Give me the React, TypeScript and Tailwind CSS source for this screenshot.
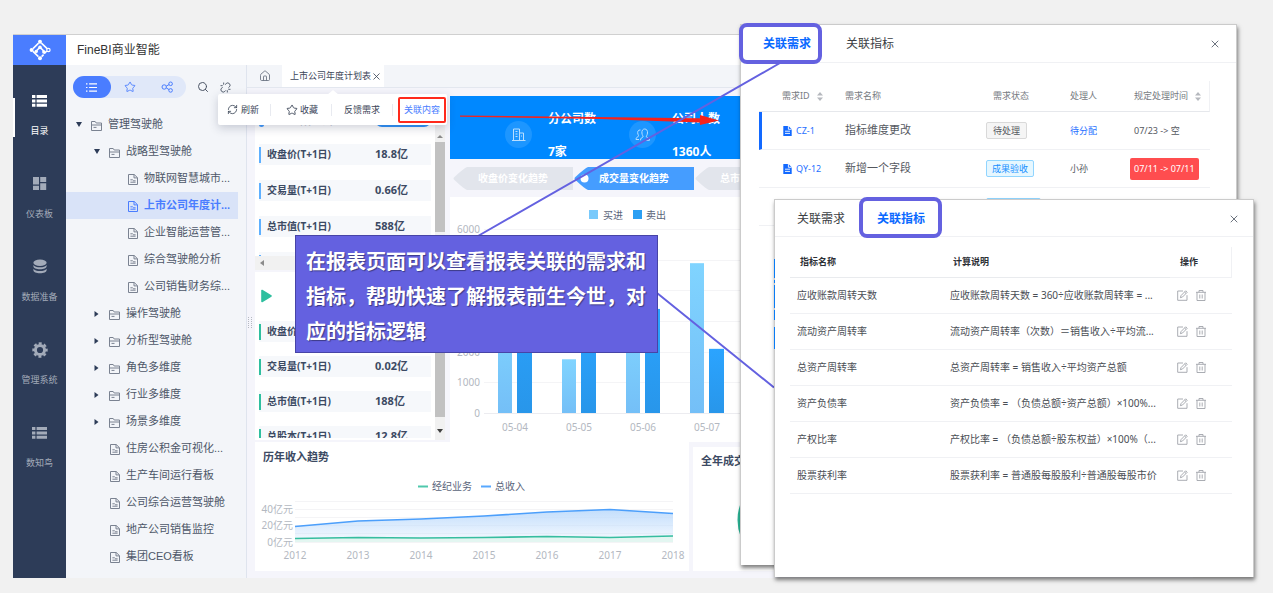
import React from "react";
import { Home, RefreshCw, Search, Star, Unlink, X } from "lucide-react";

const sans = "font-['Noto_Sans','Noto_Sans_CJK_SC',sans-serif]";
const helvetica = "font-['Liberation_Sans','Noto_Sans_CJK_SC',sans-serif]";

/* ---------- icons ---------- */

function Logo() {
  return (
    <svg width="22" height="22" viewBox="0 0 22 22" fill="none" stroke="#fff" strokeWidth="1.6">
      <path d="M9.6 4.2 4 9.6M4 12.4l5.4 5.2M12.6 17.6l2-2M12.4 4.2l6 5.6" />
      <path d="M11 8.2 7.2 12M11 8.2l4.4 4.4M17.8 12l-2.6 2.6" />
      <circle cx="11" cy="2.8" r="2" fill="#fff" stroke="none" />
      <circle cx="11" cy="19.2" r="2" fill="#fff" stroke="none" />
      <circle cx="2.6" cy="11" r="2" fill="#fff" stroke="none" />
      <circle cx="11" cy="8.4" r="1.8" fill="#fff" stroke="none" />
      <circle cx="7.2" cy="12.4" r="1.7" fill="#fff" stroke="none" />
      <circle cx="14.8" cy="13" r="1.7" fill="#fff" stroke="none" />
      <circle cx="19.4" cy="11" r="1.7" strokeWidth="1.2" />
    </svg>
  );
}

function ListBlocks() {
  return (
    <svg width="16" height="14" viewBox="0 0 16 14" fill="currentColor">
      <path d="M0 1h3.4v3H0zM4.6 1H15v3H4.6zM0 5.4h3.4v3H0zM4.6 5.4H15v3H4.6zM0 9.8h3.4v3H0zM4.6 9.8H15v3H4.6z" />
    </svg>
  );
}

function Blocks() {
  return (
    <svg width="16" height="14" viewBox="0 0 16 14" fill="currentColor">
      <path d="M1 0h6v7.6H1zM8.2 0h6v5H8.2zM1 8.8h6V13H1zM8.2 6.2h6V13H8.2z" />
    </svg>
  );
}

function Database() {
  return (
    <svg width="16" height="16" viewBox="0 0 16 16" fill="currentColor">
      <ellipse cx="8" cy="3.8" rx="6.6" ry="3.2" />
      <path d="M1.4 6c1 1.6 3.6 2.3 6.6 2.3S13.600 7.600 14.600 6v1.300c0 1.700-3 3-6.600 3s-6.600-1.300-6.600-3z" />
      <path d="M1.400 9.800c1 1.600 3.600 2.300 6.600 2.300s5.600-.7 6.600-2.300v1.500c0 1.700-3 3-6.600 3s-6.600-1.300-6.600-3z" />
    </svg>
  );
}

function Gear() {
  return (
    <svg width="16" height="16" viewBox="0 0 16 16" fill="none" stroke="currentColor">
      <circle cx="8" cy="8" r="4.600" strokeWidth="3" />
      <circle cx="8" cy="8" r="6.600" strokeWidth="2.200" strokeDasharray="3 2.184" strokeDashoffset="1.500" />
    </svg>
  );
}

function LinesIcon({ size }: { size: number }) {
  return (
    <svg width={size} height={size} viewBox="0 0 12 12" fill="none" stroke="currentColor" strokeWidth="1.2">
      <path d="M0 2h1.600M3.400 2H12M0 6h1.600M3.400 6H12M0 10h1.600M3.400 10H12" />
    </svg>
  );
}

function ShareNodes() {
  return (
    <svg width="13" height="12" viewBox="0 0 13 12" fill="none" stroke="currentColor">
      <circle cx="3.200" cy="6" r="2.200" />
      <circle cx="9.600" cy="2.800" r="1.800" />
      <circle cx="9.600" cy="9.400" r="1.800" />
      <path d="M5.200 5.200 8 3.600M5.200 6.800 8 8.600" />
    </svg>
  );
}

function FolderIcon() {
  return (
    <svg width="11" height="10" viewBox="0 0 11 10" fill="none" stroke="currentColor">
      <path d="M.5 9.500v-9h3.700l1 1.500h5.300v7.500z" />
      <path d="M.5 4h10M2.500 6.400h3" />
    </svg>
  );
}

function DocIcon() {
  return (
    <svg width="10" height="11" viewBox="0 0 10 11" fill="none" stroke="currentColor">
      <path d="M.5.500h5.700l3.300 3.200v6.800h-9z" />
      <path d="M6 .5v3.400h3.500M2.400 5.800h2.400M2.400 8.200h5.200M5 6.800h2.600" />
    </svg>
  );
}

function SolidDoc() {
  return (
    <svg width="9" height="10" viewBox="0 0 9 10">
      <path d="M.3 0h5.200L8.700 3.200V10H.3z" fill="#1269ff" />
      <path d="M5.400 0v3.300h3.300M2 5.200h5M2 7.400h5" stroke="#fff" strokeWidth=".9" fill="none" />
    </svg>
  );
}

function EditIcon() {
  return (
    <svg width="11" height="11" viewBox="0 0 11 11" fill="none" stroke="currentColor" strokeWidth=".9">
      <path d="M6 1H.7v9.300H10V5.200" />
      <path d="M3.400 7.700 4 5.600 8.700.8l1.500 1.500-4.700 4.700zM7.600 2l1.400 1.400" />
    </svg>
  );
}

function TrashIcon() {
  return (
    <svg width="10" height="11" viewBox="0 0 10 11" fill="none" stroke="currentColor" strokeWidth=".9">
      <path d="M0 2.300h10M3 2.200V.500h4v1.700M1 2.300v8.200h8V2.300M3.800 4.500v4M6.200 4.500v4" />
    </svg>
  );
}

function Sorter() {
  return (
    <svg width="6" height="9" viewBox="0 0 6 9" fill="#b5b8be">
      <path d="M3 0l3 3.600H0zM3 9l3-3.600H0z" />
    </svg>
  );
}

/* ---------- navigation ---------- */

const navItems = [
  { label: "目录", icon: <ListBlocks />, active: true },
  { label: "仪表板", icon: <Blocks />, active: false },
  { label: "数据准备", icon: <Database />, active: false },
  { label: "管理系统", icon: <Gear />, active: false },
  { label: "数知鸟", icon: <ListBlocks />, active: false },
];

function NavRail() {
  return (
    <nav className="w-[53px] shrink-0 bg-[#2d3c58] pt-[25px]">
      {navItems.map((item) => (
        <button
          key={item.label}
          className={`relative flex h-[83px] w-full flex-col items-center ${item.active ? "text-white" : "text-[#a3abb9]"}`}
        >
          {item.active && <span className="absolute left-0 top-2 h-[39px] w-[2px] bg-white" />}
          <span className="flex h-[22px] items-center">{item.icon}</span>
          <span className="mt-[12px] text-[9px] leading-[14px]">{item.label}</span>
        </button>
      ))}
    </nav>
  );
}

type Node = { label: string; depth: number; kind: "open" | "closed" | "doc"; selected?: boolean };

const tree: Node[] = [
  { label: "管理驾驶舱", depth: 0, kind: "open" },
  { label: "战略型驾驶舱", depth: 1, kind: "open" },
  { label: "物联网智慧城市...", depth: 2, kind: "doc" },
  { label: "上市公司年度计...", depth: 2, kind: "doc", selected: true },
  { label: "企业智能运营管...", depth: 2, kind: "doc" },
  { label: "综合驾驶舱分析", depth: 2, kind: "doc" },
  { label: "公司销售财务综...", depth: 2, kind: "doc" },
  { label: "操作驾驶舱", depth: 1, kind: "closed" },
  { label: "分析型驾驶舱", depth: 1, kind: "closed" },
  { label: "角色多维度", depth: 1, kind: "closed" },
  { label: "行业多维度", depth: 1, kind: "closed" },
  { label: "场景多维度", depth: 1, kind: "closed" },
  { label: "住房公积金可视化...", depth: 1, kind: "doc" },
  { label: "生产车间运行看板", depth: 1, kind: "doc" },
  { label: "公司综合运营驾驶舱", depth: 1, kind: "doc" },
  { label: "地产公司销售监控", depth: 1, kind: "doc" },
  { label: "集团CEO看板", depth: 1, kind: "doc" },
];

const indent = ["pl-[10px]", "pl-[28px]", "pl-[46px]"];

function TreePanel() {
  return (
    <aside className={`w-[181px] shrink-0 border-r border-[#dfe4ee] bg-[#f3f5f9] pt-[11px] ${helvetica}`}>
      <div className="flex items-center pl-[7px]">
        <div className="flex h-[22px] w-[113px] rounded-full bg-[#e0e8f9] text-[#4a7dff]">
          <button aria-label="目录" className="flex flex-1 items-center justify-center rounded-full bg-[#4a7dff] text-white">
            <LinesIcon size={11} />
          </button>
          <button aria-label="收藏" className="flex flex-1 items-center justify-center">
            <Star size={12} strokeWidth={1.8} />
          </button>
          <button aria-label="分享" className="flex flex-1 items-center justify-center">
            <ShareNodes />
          </button>
        </div>
        <button aria-label="搜索" className="ml-[11px] text-[#4c5566]">
          <Search size={12} strokeWidth={2} />
        </button>
        <button aria-label="取消固定" className="ml-[11px] text-[#4c5566]">
          <Unlink size={11} strokeWidth={2} />
        </button>
      </div>
      <ul className="mt-[13px] pr-2">
        {tree.map((n) => (
          <li key={n.label}>
            <a
              href="#"
              className={`flex h-[27px] items-center whitespace-nowrap text-[11px] ${indent[n.depth]} ${
                n.selected ? "bg-[#d9e3f8] font-bold text-[#4a7dff]" : "text-[#4d5768]"
              }`}
            >
              <span className="flex w-[15px] items-center text-[#2d3c58]">
                {n.kind === "open" && (
                  <svg width="6" height="5" viewBox="0 0 6 5" fill="currentColor"><path d="M0 0h6L3 5z" /></svg>
                )}
                {n.kind === "closed" && (
                  <svg width="5" height="6" viewBox="0 0 5 6" fill="currentColor"><path d="M.5 0v6l4-3z" /></svg>
                )}
              </span>
              <span className={`flex w-[17px] pt-[2px] ${n.kind === "doc" ? "pl-px" : ""} ${n.selected ? "text-[#4a7dff]" : "text-[#7a8291]"}`}>
                {n.kind === "doc" ? <DocIcon /> : <FolderIcon />}
              </span>
              {n.label}
            </a>
          </li>
        ))}
      </ul>
    </aside>
  );
}

/* ---------- dashboard ---------- */

function MetricRow({ label, value, tone }: { label: string; value: string; tone: "blue" | "green" }) {
  return (
    <div className="flex h-[21px] shrink-0 items-center bg-[#f6f8fb] text-[10px] font-bold text-[#3c4a63]">
      <span className={`h-[16px] w-[2px] ${tone === "blue" ? "bg-[#5eb0ff]" : "bg-[#2fbf9f]"}`} />
      <span className="w-[114px] whitespace-nowrap pl-[6px]">{label}</span>
      <span className="whitespace-nowrap text-[11px]">{value}</span>
    </div>
  );
}

function Metrics() {
  return (
    <div className="flex w-[190px] shrink-0 flex-col gap-[2px]">
      <section className="flex h-[174px] overflow-hidden bg-white">
        <div className="flex flex-1 flex-col overflow-hidden">
          <div className="flex h-[160px] flex-col gap-[15px] overflow-hidden px-1">
            <div className="flex h-[33px] shrink-0 items-end text-[11px] font-bold leading-[18px] text-[#3c4a63]">
              <span className="mb-[2px] h-[12px] w-[5px] rounded-sm bg-[#3f9bff]" />
              <span className="w-[111px] pl-[32px]">指标数值</span>
              <span className="mb-[2px] h-[14px] flex-1 rounded-full bg-[#2d93fb]" />
            </div>
            <MetricRow label="收盘价(T+1日)" value="18.8亿" tone="blue" />
            <MetricRow label="交易量(T+1日)" value="0.66亿" tone="blue" />
            <MetricRow label="总市值(T+1日)" value="588亿" tone="blue" />
            <MetricRow label="" value="" tone="blue" />
          </div>
          <div className="flex h-[14px] items-center bg-[#f1f1f1] pl-[5px]">
            <svg width="4" height="6" viewBox="0 0 4 6" fill="#8b8b8b"><path d="M4 0v6L0 3z" /></svg>
          </div>
        </div>
        <div className="flex w-[10px] flex-col items-center bg-[#f1f1f1] pt-[39px]">
          <svg width="6" height="3" viewBox="0 0 6 3" fill="#8b8b8b"><path d="M0 3h6L3 0z" /></svg>
          <span className="mt-[4px] h-[90px] w-full bg-[#c1c1c1]" />
        </div>
      </section>
      <section className="flex h-[168px] overflow-hidden bg-white">
        <div className="flex flex-1 flex-col gap-[14px] overflow-hidden border-b-2 border-white px-1">
          <div className="flex h-[35px] shrink-0 items-end pl-[2px]">
            <svg className="mb-1" width="11" height="14" viewBox="0 0 11 14"><path d="M1 1.500v11l9-5.500z" fill="#2fbf9f" stroke="#2fbf9f" strokeWidth="1.600" strokeLinejoin="round" /></svg>
          </div>
          <MetricRow label="收盘价(T+1日)" value="" tone="green" />
          <MetricRow label="交易量(T+1日)" value="0.02亿" tone="green" />
          <MetricRow label="总市值(T+1日)" value="188亿" tone="green" />
          <MetricRow label="总股本(T+1日)" value="12.8亿" tone="green" />
        </div>
        <div className="flex w-[10px] flex-col items-center bg-[#f1f1f1]">
          <span className="h-[145px] w-full bg-[#c1c1c1]" />
          <svg className="mt-[12px]" width="6" height="4" viewBox="0 0 6 4" fill="#404040"><path d="M0 0h6L3 4z" /></svg>
        </div>
      </section>
    </div>
  );
}

function Stat({ title, value, children }: { title: string; value: string; children: React.ReactNode }) {
  return (
    <div className="flex w-[124px] shrink-0 items-center">
      <span className="mt-[13px] flex size-[27px] items-center justify-center rounded-full bg-[#1d96ff]">{children}</span>
      <div className="ml-[16px] mt-[16px] flex flex-col gap-[17px] whitespace-nowrap text-[12px] font-bold leading-4 text-white">
        <span>{title}</span>
        <span>{value}</span>
      </div>
    </div>
  );
}

function Ribbon({ label, active }: { label: string; active?: boolean }) {
  return (
    <button className="relative mr-[1px] flex h-[23px] w-[120px] shrink-0 items-center text-[10px] font-bold text-white">
      <svg className="absolute inset-0" width="120" height="23" viewBox="0 0 120 23">
        <path d="M14 0H120V23H14Q11 22 2 13.500Q-1 11.500 2 9.500Q11 1 14 0z" fill={active ? "#459dff" : "#e2e5ec"} />
        {active && <circle cx="10.500" cy="11.500" r="4" fill="#fff" />}
      </svg>
      <span className="relative pl-[25px]">{label}</span>
    </button>
  );
}

const bars = [
  { day: "05-04", buy: 3200, sell: 4100 },
  { day: "05-05", buy: 1750, sell: 2900 },
  { day: "05-06", buy: 2800, sell: 3390 },
  { day: "05-07", buy: 4880, sell: 2090 },
];

function BarChart() {
  const y = (v: number) => 216 - v * 0.0307;
  return (
    <svg className="block" width="300" height="245" viewBox="0 0 300 245" fontSize="10">
      <defs>
        <linearGradient id="buy" x1="0" x2="0" y1="0" y2="1">
          <stop offset="0" stopColor="#80d4ff" /><stop offset="1" stopColor="#74bff7" />
        </linearGradient>
        <linearGradient id="sell" x1="0" x2="0" y1="0" y2="1">
          <stop offset="0" stopColor="#2ba4ff" /><stop offset="1" stopColor="#2896ea" />
        </linearGradient>
      </defs>
      <rect x="139" y="13" width="9" height="9" fill="#78c9fb" />
      <text x="153" y="22" fill="#59647a">买进</text>
      <rect x="183" y="13" width="9" height="9" fill="#2b9ff3" />
      <text x="196" y="22" fill="#59647a">卖出</text>
      {[0, 1000, 2000, 3000, 4000, 5000, 6000].map((v) => (
        <g key={v}>
          <path d={`M34 ${Math.round(y(v)) + 0.5}H300`} stroke={v === 0 ? "#ececf0" : "#f4f4f6"} />
          {(v < 3000 || v === 6000) && (
            <text x="30" y={y(v) + 4} textAnchor="end" fill="#b3b8c1">{v}</text>
          )}
        </g>
      ))}
      {bars.map((b, i) => (
        <g key={b.day}>
          <rect x={48 + i * 64} y={y(b.buy)} width="14" height={216 - y(b.buy)} fill="url(#buy)" />
          <rect x={67 + i * 64} y={y(b.sell)} width="15" height={216 - y(b.sell)} fill="url(#sell)" />
          <text x={65 + i * 64} y="234" textAnchor="middle" fill="#b3b8c1">{b.day}</text>
        </g>
      ))}
    </svg>
  );
}

function TrendChart() {
  const years = [2012, 2013, 2014, 2015, 2016, 2017, 2018];
  const total = [53.5, 48, 46, 43, 39, 36.500, 40.500];
  const broker = [65.500, 64.500, 65, 64.500, 63.500, 64.500, 63];
  const line = (a: number[]) => a.map((v, i) => `${i ? "L" : "M"}${40 + i * 63} ${v}`).join("");
  return (
    <svg className="block" width="435" height="92" viewBox="0 0 435 92" fontSize="10">
      <defs>
        <linearGradient id="total" x1="0" x2="0" y1="0" y2="1">
          <stop offset="0" stopColor="#c3defc" /><stop offset="1" stopColor="#c3defc" stopOpacity=".25" />
        </linearGradient>
      </defs>
      <path d="M163 13.500h10" stroke="#4fc8ac" strokeWidth="2" />
      <text x="177" y="17" fill="#59647a">经纪业务</text>
      <path d="M226 13.500h10" stroke="#58a8ff" strokeWidth="2" />
      <text x="240" y="17" fill="#59647a">总收入</text>
      {[28.5, 36.5, 44.5, 52.5, 60.5, 69.5].map((v) => (
        <path key={v} d={`M40 ${v}H418`} stroke="#f4f4f6" />
      ))}
      <path d={`${line(total)}V65H40z`} fill="url(#total)" />
      <path d={`${line(broker)}V69H40z`} fill="#e3f6f1" />
      <path d={line(total)} fill="none" stroke="#4c9ffb" strokeWidth="1.600" />
      <path d={line(broker)} fill="none" stroke="#36bd9f" strokeWidth="1.600" />
      <g fill="#b3b8c1">
        <text x="38" y="40" textAnchor="end">40亿元</text>
        <text x="38" y="56" textAnchor="end">20亿元</text>
        <text x="38" y="73" textAnchor="end">0亿元</text>
        {years.map((yr, i) => (
          <text key={yr} x={40 + i * 63} y="86" textAnchor="middle">{yr}</text>
        ))}
      </g>
    </svg>
  );
}

function Dashboard() {
  return (
    <main className="flex min-w-0 flex-1 flex-col overflow-hidden bg-[#f5f5fb]">
      <div className="flex h-[23px] items-stretch border-b border-[#e3e7ef] bg-[#f3f5f9]">
        <button aria-label="首页" className="flex w-[35px] items-center justify-center text-[#6d7685]">
          <Home size={12} strokeWidth={1.800} />
        </button>
        <div className="flex items-center bg-white pl-2 pr-[2px] text-[9px] text-[#3c4658]">
          <span>上市公司年度计划表</span>
          <button aria-label="关闭"><X size={11} strokeWidth={1.800} /></button>
        </div>
      </div>
      <div className="flex flex-1 flex-col pb-[7px] pl-2 pt-2">
        <div className="flex h-[346px] gap-[5px]">
          <Metrics />
          <div className="flex min-w-0 flex-1 flex-col overflow-hidden">
            <div className="flex h-[63px] shrink-0 bg-[#0088ff] pl-[55px]">
              <Stat title="分公司数" value="7家">
                <svg width="14" height="13" viewBox="0 0 14 13" fill="none" stroke="#b9deff"><path d="M1.500 12.500V1h6v11.500M7.500 5h4v7.500M0 12.500h13.500M3.500 3.500h2M3.500 6h2M3.500 8.500h2M9 8h1" /></svg>
              </Stat>
              <Stat title="公司人数" value="1360人">
                <svg width="16" height="13" viewBox="0 0 16 13" fill="none" stroke="#b9deff"><path d="M5.500 2C3 1.500 2.200 4 2.900 6c.4 1.200.9 1.700.6 2.200C2.600 9 1 9.300 1 11.500h3M5.500 12.300c0-2.200 1.300-2.600 2.500-3.300.5-.7-.9-1.700-1.100-4C6.700 2.600 7.800 1 9.700 1s3 1.600 2.800 4c-.2 2.300-1.600 3.300-1.100 4 1.200.7 3.100 1.100 3.100 3.300h-3.500" /></svg>
              </Stat>
            </div>
            <div className="flex h-[38px] shrink-0 items-center pl-[3px]">
              <Ribbon label="收盘价变化趋势" />
              <Ribbon label="成交量变化趋势" active />
              <Ribbon label="总市值变化趋势" />
            </div>
            <div className="flex-1 bg-white"><BarChart /></div>
          </div>
        </div>
        <div className="flex flex-1">
          <section className="w-[434px] shrink-0 overflow-hidden bg-white">
            <h2 className="pl-2 pt-[6px] text-[11px] font-bold leading-[18px] text-[#3c4a63]">历年收入趋势</h2>
            <div className="mt-[7px]"><TrendChart /></div>
          </section>
          <section className="ml-1 mt-[5px] min-w-0 flex-1 overflow-hidden bg-white">
            <h2 className="pl-2 pt-[5px] text-[11px] font-bold leading-[18px] text-[#3c4a63]">全年成交</h2>
            <svg className="ml-[44px] mt-[5px]" width="90" height="90" viewBox="0 0 90 90"><circle cx="45" cy="45" r="36" fill="none" stroke="#2bb596" strokeWidth="17" /></svg>
          </section>
        </div>
      </div>
    </main>
  );
}

function Toolbar() {
  return (
    <div className="absolute left-[218px] top-[94px] flex h-[31px] w-[229px] items-center rounded-[2px] bg-white text-[9px] text-[#3c4658] shadow-[0_3px_10px_rgba(40,50,80,0.22)]">
      <svg className="absolute -top-[4px] left-[109px]" width="12" height="5" viewBox="0 0 12 5" fill="#fff"><path d="M6 0l6 5H0z" /></svg>
      <button className="flex w-[52px] shrink-0 items-center gap-[3px] pl-[9px]">
        <RefreshCw size={11} strokeWidth={1.800} />刷新
      </button>
      <span className="h-3 w-px bg-[#e8eaf0]" />
      <button className="flex w-[60px] shrink-0 items-center gap-[2px] pl-[15px]">
        <Star size={12} strokeWidth={1.800} />收藏
      </button>
      <span className="h-3 w-px bg-[#e8eaf0]" />
      <button className="w-[60px] shrink-0">反馈需求</button>
      <span className="h-3 w-px bg-[#e8eaf0]" />
      <button className="ml-auto mr-px h-[26px] w-[48px] shrink-0 rounded-[2px] border-2 border-[#ff2a1c] bg-white text-[#4a7dff]">关联内容</button>
    </div>
  );
}

/* ---------- dialogs ---------- */

const dialogFrame =
  "absolute overflow-visible border border-b-0 border-[#cbcbcb] bg-white shadow-[1px_3px_4px_rgba(0,0,0,0.5)]";

const head = "h-[31px] border-b border-[#e6e8ec] text-left font-normal";
const cell = "h-[38px] border-b border-[#f0f1f4]";

function DemandDialog() {
  return (
    <section role="dialog" aria-label="关联需求" className={`${dialogFrame} bottom-[28px] left-[740px] right-[36px] top-[24px]`}>
      <header className="flex h-[38px] items-center border-b border-[#f0f1f4] pl-[22px] pr-[15px] text-[12px]">
        <button className="flex h-full items-center border-b-2 border-[#459dff] pt-[2px] font-bold text-[#0a69ff]">关联需求</button>
        <button className="ml-[35px] text-[#3c3f45]">关联指标</button>
        <button aria-label="关闭" className="ml-auto text-[#5c6470]"><X size={12} strokeWidth={1.800} /></button>
      </header>
      <table className="ml-[18px] mt-[18px] w-[451px] table-fixed border-separate border-spacing-0 text-[9px] text-[#55595f]">
        <colgroup>
          <col className="w-[86px]" /><col className="w-[141px]" /><col className="w-[84px]" /><col className="w-[64px]" /><col />
        </colgroup>
        <thead>
          <tr className="text-[#777b82]">
            <th className={`${head} pl-[23px]`}><span className="flex items-center gap-[7px]">需求ID<Sorter /></span></th>
            <th className={head}>需求名称</th>
            <th className={`${head} pl-[7px]`}>需求状态</th>
            <th className={head}>处理人</th>
            <th className={`${head} border-r border-r-[#f0f1f4]`}><span className="flex items-center gap-[7px]">规定处理时间<Sorter /></span></th>
          </tr>
        </thead>
        <tbody>
          <tr>
            <td className={`${cell} border-l-[3px] border-l-[#1269ff] pl-[21px]`}>
              <a href="#" className="flex items-center gap-[4px] text-[#1f6fff]"><SolidDoc />CZ-1</a>
            </td>
            <td className={`${cell} text-[11px]`}>指标维度更改</td>
            <td className={cell}><span className="inline-block rounded-[2px] border border-[#d9d9d9] bg-[#f5f5f5] px-[6px] leading-[15px]">待处理</span></td>
            <td className={`${cell} text-[#1f6fff]`}>待分配</td>
            <td className={cell}>07/23 -&gt; 空</td>
          </tr>
          <tr>
            <td className={`${cell} pl-[24px]`}>
              <a href="#" className="flex items-center gap-[4px] text-[#1f6fff]"><SolidDoc />QY-12</a>
            </td>
            <td className={`${cell} text-[11px]`}>新增一个字段</td>
            <td className={cell}><span className="inline-block rounded-[2px] border border-[#91d5ff] bg-[#e6f7ff] px-[5px] leading-[15px] text-[#1890ff]">成果验收</span></td>
            <td className={cell}>小孙</td>
            <td className={cell}><span className="-ml-[4px] inline-block whitespace-nowrap rounded-[2px] bg-[#ff4d4f] px-[4px] leading-[22px] text-white">07/11 -&gt; 07/11</span></td>
          </tr>
          <tr>
            <td className={cell} />
            <td className={cell} />
            <td className={cell}><span className="block h-[17px] w-[55px] rounded-[2px] border border-[#91d5ff] bg-[#e6f7ff]" /></td>
            <td className={cell} />
            <td className={cell} />
          </tr>
        </tbody>
      </table>
    </section>
  );
}

const indicators = [
  ["应收账款周转天数", "应收账款周转天数 = 360÷应收账款周转率 = ..."],
  ["流动资产周转率", "流动资产周转率（次数）＝销售收入÷平均流..."],
  ["总资产周转率", "总资产周转率 = 销售收入÷平均资产总额"],
  ["资产负债率", "资产负债率 = （负债总额÷资产总额）×100%..."],
  ["产权比率", "产权比率 = （负债总额÷股东权益）×100%（..."],
  ["股票获利率", "股票获利率 = 普通股每股股利÷普通股每股市价"],
];

function IndicatorDialog() {
  return (
    <section role="dialog" aria-label="关联指标" className={`${dialogFrame} bottom-[16px] left-[774px] right-[19px] top-[199px]`}>
      <header className="flex h-[37px] items-center border-b border-[#f0f1f4] pl-[22px] pr-[13px] pt-px text-[12px]">
        <button className="text-[#3c3f45]">关联需求</button>
        <button className="ml-[32px] font-bold text-[#0a69ff]">关联指标</button>
        <button aria-label="关闭" className="ml-auto text-[#5c6470]"><X size={12} strokeWidth={1.800} /></button>
      </header>
      <div className="pl-[15px] pr-[21px] pt-[10px]">
        <table className="w-full table-fixed border-separate border-spacing-0 whitespace-nowrap text-[10px] text-[#4a4e55]">
          <colgroup><col className="w-[153px]" /><col /><col className="w-[62px]" /></colgroup>
          <thead>
            <tr className="text-[9px] text-[#2c2f35]">
              <th className="h-[31px] border-b border-[#e9ebee] pl-[10px] text-left">指标名称</th>
              <th className="h-[31px] border-b border-[#e9ebee] pl-[10px] text-left">计算说明</th>
              <th className="h-[31px] border-b border-r border-[#f0f1f4] pl-[10px] text-left">操作</th>
            </tr>
          </thead>
          <tbody>
            {indicators.map(([name, formula]) => (
              <tr key={name}>
                <td className="h-[36px] border-b border-[#f0f1f4] pl-[7px]">{name}</td>
                <td className="h-[36px] border-b border-[#f0f1f4] pl-[7px]">{formula}</td>
                <td className="h-[36px] border-b border-[#f0f1f4] pl-[7px] text-[#a0a4aa]">
                  <span className="flex items-center gap-2">
                    <button aria-label={`编辑${name}`}><EditIcon /></button>
                    <button aria-label={`删除${name}`}><TrashIcon /></button>
                  </span>
                </td>
              </tr>
            ))}
          </tbody>
        </table>
      </div>
    </section>
  );
}

export default function App() {
  return (
    <div className={`relative flex min-h-screen overflow-hidden bg-[#f1f1f1] pb-[15px] pl-[13px] pr-[80px] pt-[34px] ${sans}`}>
      <div className="flex min-w-0 flex-1 flex-col bg-white">
        <header className="flex h-[31px] shrink-0 items-center border-t border-[#d0d0d0] bg-white">
          <div className="flex h-full w-[53px] items-center justify-center bg-[#4a7dff]"><Logo /></div>
          <h1 className={`pl-[11px] text-[12px] text-[#333] ${helvetica}`}>FineBI商业智能</h1>
        </header>
        <div className="flex flex-1">
          <NavRail />
          <TreePanel />
          <Dashboard />
        </div>
      </div>

      <svg className="absolute left-[248px] top-[317px]" width="4" height="11" viewBox="0 0 4 11" stroke="#b5b9c2" strokeDasharray="1 1"><path d="M.5 0v11M3.500 0v11" /></svg>
      <Toolbar />
      <DemandDialog />

      <svg className="pointer-events-none absolute inset-0" width="1273" height="593" viewBox="0 0 1273 593">
        <path d="M460 115.500 700 118.200V115l19 5.500-19 4.500v-2.500L600 119 460 116.800z" fill="#f5231c" />
        <path d="M780 63 478 236M657 293 774 387.500" stroke="#6461e0" strokeWidth="2" />
      </svg>

      <p className="absolute left-[295px] top-[235px] h-[118px] w-[363px] border border-[#4744a6] bg-[#6461e0] px-[10px] pt-[8px] text-[20px] font-bold leading-[35px] text-white [text-shadow:1px_1px_1px_rgba(0,0,0,0.4)]">
        在报表页面可以查看报表关联的需求和指标，帮助快速了解报表前生今世，对应的指标逻辑
      </p>

      <IndicatorDialog />
      <svg className="pointer-events-none absolute left-[774px] top-[259px]" width="1" height="90" viewBox="0 0 1 90" fill="#0a7cf5"><path d="M0 0h1v19H0zM0 21h1v3H0zM0 26h1v23H0zM0 51h1v10H0zM0 68h1v22H0z" /></svg>
      <span className="pointer-events-none absolute left-[739px] top-[23px] h-[41px] w-[83px] rounded-[8px] border-4 border-[#6461e0]" />
      <span className="pointer-events-none absolute left-[859px] top-[197px] h-[41px] w-[83px] rounded-[8px] border-4 border-[#6461e0]" />
    </div>
  );
}
